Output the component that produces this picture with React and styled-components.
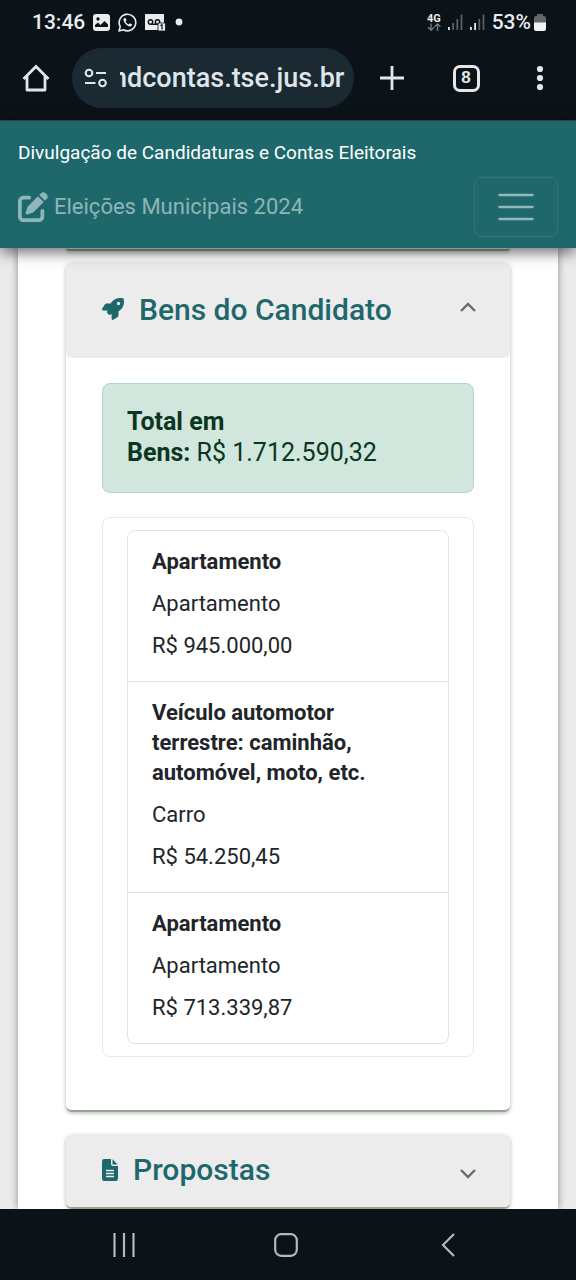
import { useState } from 'react';
import styled, { createGlobalStyle } from 'styled-components';
import { FaPenToSquare, FaRocket } from 'react-icons/fa6';

const GlobalStyle = createGlobalStyle`
  * {
    box-sizing: border-box;
  }

  body {
    margin: 0;
    background: #ebebeb;
    color: #212529;
    font-family: Roboto, "Noto Sans", sans-serif;
    font-size: 22px;
    line-height: 30px;
  }
`;

const Screen = styled.div`
  display: flex;
  flex-direction: column;
  min-height: 100vh;
`;

/* Barra de status do telefone */
const StatusBar = styled.div`
  display: flex;
  align-items: center;
  justify-content: space-between;
  height: 44px;
  padding: 0 30px 0 32px;
  background: #0b1218;
  color: #e8ecef;
  font-size: 21px;
  font-weight: 500;
`;

const StatusGroup = styled.div`
  display: flex;
  align-items: center;
  gap: ${props => props.$gap}px;
`;

/* Barra do navegador */
const BrowserBar = styled.div`
  display: flex;
  align-items: center;
  padding: 4px 16px 12px;
  background: #0b1218;
  border-bottom: 1px solid #3b4950;
`;

const IconButton = styled.button`
  display: flex;
  align-items: center;
  justify-content: center;
  flex: none;
  width: 40px;
  height: 40px;
  padding: 0;
  border: 0;
  background: none;
  color: #e3e7ea;
`;

const AddressPill = styled.label`
  display: flex;
  align-items: center;
  gap: 12px;
  flex: 1;
  min-width: 0;
  height: 60px;
  margin-left: 16px;
  padding: 0 8px 0 12px;
  border-radius: 30px;
  background: #1b2932;
  color: #dfe5ea;
`;

const AddressInput = styled.input`
  flex: 1;
  min-width: 0;
  padding: 0;
  border: 0;
  outline: 0;
  background: none;
  color: #dfe5ea;
  font: 500 27px Roboto, sans-serif;
  text-indent: -8px;
`;

const BrowserActions = styled.div`
  display: flex;
  justify-content: space-between;
  width: 188px;
  margin-left: 18px;
`;

const TabCount = styled.span`
  display: flex;
  align-items: center;
  justify-content: center;
  width: 27px;
  height: 27px;
  border: 3px solid #e3e7ea;
  border-radius: 7px;
  font-size: 17px;
  font-weight: 700;
  line-height: 20px;
`;

/* Cabeçalho do site */
const SiteHeader = styled.header`
  position: relative;
  z-index: 1;
  display: flex;
  flex-direction: column;
  gap: 9px;
  padding: 17px 18px 11px;
  background: #1e686c;
  box-shadow: 0 4px 14px rgba(0, 0, 0, 0.6);
  color: #fff;
`;

const SiteTitle = styled.div`
  font-size: 19px;
`;

const HeaderRow = styled.div`
  display: flex;
  align-items: center;
  justify-content: space-between;
`;

const Brand = styled.a`
  display: flex;
  align-items: center;
  gap: 6px;
  color: #8eb5b7;
  font-size: 22px;
  text-decoration: none;
`;

const MenuButton = styled.button`
  display: flex;
  align-items: center;
  justify-content: center;
  width: 84px;
  height: 60px;
  padding: 0;
  border: 1px solid #30767a;
  border-radius: 8px;
  background: none;
  color: #8eb8ba;
`;

const Content = styled.main`
  flex: 1;
  display: flex;
  flex-direction: column;
  gap: 23px;
  margin: 0 18px;
  padding: 0 48px;
  background: #fff;
  box-shadow: 0 0 8px rgba(0, 0, 0, 0.4);
`;

const Card = styled.section`
  border-bottom: 2px solid #93a791;
  border-radius: 6px;
  background: #fff;
  box-shadow: 0 1px 4px rgba(0, 0, 0, 0.3);
`;

/* Fim do painel anterior, logo abaixo do cabeçalho */
const CardEnd = styled.div`
  height: 3px;
  margin-bottom: -11px;
  border-bottom: 2px solid #93a791;
  border-radius: 0 0 6px 6px;
  box-shadow: 0 1px 4px rgba(0, 0, 0, 0.3);
`;

const CardHeader = styled.button`
  display: flex;
  align-items: center;
  width: 100%;
  height: ${props => (props.$open ? 95 : 72)}px;
  padding: 0 33px 3px 36px;
  border: 0;
  border-radius: 6px;
  background: #ececec;
  color: #1e686c;
  font: 500 30px Roboto, sans-serif;
  text-align: left;
`;

const CardTitle = styled.span`
  flex: 1;
  margin-left: 15px;
`;

const CardBody = styled.div`
  padding: 25px 36px 53px;
`;

const Total = styled.div`
  margin-bottom: 24px;
  padding: 22px 24px 24px;
  border: 1px solid #b4d6c5;
  border-radius: 8px;
  background: #d1e6dd;
  color: #0a3622;
  font-size: 25px;
  line-height: 31px;
`;

const ListFrame = styled.div`
  padding: 12px 24px;
  border: 1px solid #e8e8e8;
  border-radius: 8px;
`;

const AssetList = styled.ul`
  margin: 0;
  padding: 0;
  border: 1px solid #e2e2e2;
  border-radius: 8px;
  list-style: none;
`;

const Asset = styled.li`
  display: flex;
  flex-direction: column;
  gap: 12px;
  padding: 16px 24px 20px;

  & + & {
    border-top: 1px solid #e2e2e2;
  }
`;

/* Botões de navegação do sistema */
const SystemNav = styled.nav`
  position: relative;
  z-index: 1;
  display: flex;
  align-items: center;
  justify-content: space-around;
  height: 72px;
  padding: 0 47px 0 43px;
  background: #0b1218;
`;

const bens = [
  { id: 1, tipo: 'Apartamento', descricao: 'Apartamento', valor: 'R$ 945.000,00' },
  {
    id: 2,
    tipo: 'Veículo automotor terrestre: caminhão, automóvel, moto, etc.',
    descricao: 'Carro',
    valor: 'R$ 54.250,45',
  },
  { id: 3, tipo: 'Apartamento', descricao: 'Apartamento', valor: 'R$ 713.339,87' },
];

const PictureIcon = () => (
  <svg width="17" height="17" viewBox="0 0 17 17">
    <rect width="17" height="17" rx="3" fill="#e8ecef" />
    <circle cx="5" cy="5" r="1.7" fill="#0b1218" />
    <path d="M2 13 V11 L5 8.5 L7.5 11 L11.5 7 L15 10.5 V13 Z" fill="#0b1218" />
  </svg>
);

const WhatsappIcon = () => (
  <svg width="19" height="19" viewBox="0 0 19 19" fill="none">
    <path d="M1 18 L2.2 13.6 A8.3 8.3 0 1 1 5.4 16.8 Z" stroke="#e8ecef" strokeWidth="1.6" strokeLinejoin="round" />
    <path
      d="M6.8 5 C5.4 5.4 5 7.2 6.2 9 C7.6 11.5 9.6 13 11.6 13.4 C13.2 13.6 14.2 12.4 14 11.2 L11.8 10.2 L10.7 11.4 C9.3 10.8 8.2 9.7 7.6 8.4 L8.5 7.2 L7.7 5.1 Z"
      fill="#e8ecef"
    />
  </svg>
);

const VoicemailIcon = () => (
  <svg width="21" height="17" viewBox="0 0 21 17">
    <path d="M0 0 H19 V9 H14 V16 H0 Z" fill="#e8ecef" />
    <g fill="none" stroke="#0b1218" strokeWidth="1.4">
      <circle cx="5.5" cy="8" r="2.2" />
      <circle cx="12.5" cy="8" r="2.2" />
      <path d="M5.5 10.3 H12.5" />
    </g>
    <rect x="13" y="9" width="7.5" height="8" fill="#e8ecef" stroke="#0b1218" strokeWidth="0.8" />
    <path d="M15.3 11.5 L17 10.8 V15.5" fill="none" stroke="#0b1218" strokeWidth="1.2" />
  </svg>
);

const NetworkIcon = () => (
  <svg width="14" height="19" viewBox="0 0 14 19">
    <text x="0" y="9" fontSize="11" fontWeight="700" fill="#e8ecef">4G</text>
    <g fill="none" stroke="#737a80" strokeWidth="1.4">
      <path d="M4 10.5 V17 M1 14.3 L4 17.2 L7 14.3" />
      <path d="M10.5 18 V11 M7.6 13.8 L10.5 11 L13.4 13.8" />
    </g>
  </svg>
);

const SignalIcon = ({ level }) => (
  <svg width="15" height="16" viewBox="0 0 15 16">
    {[3, 7, 11, 15.5].map((h, i) => (
      <rect key={h} x={i * 4.2} y={16 - h} width="1.8" height={h} fill={i < level ? '#e8ecef' : '#596066'} />
    ))}
  </svg>
);

const BatteryIcon = () => (
  <svg width="12" height="17" viewBox="0 0 12 17">
    <path d="M3 0 H9 V2 H10 Q12 2 12 4 V9 H0 V4 Q0 2 2 2 H3 Z" fill="#62676b" />
    <path d="M0 8.5 H12 V15 Q12 17 10 17 H2 Q0 17 0 15 Z" fill="#f1f3f4" />
  </svg>
);

const HomeIcon = () => (
  <svg width="28" height="28" viewBox="0 0 28 28" fill="none" stroke="currentColor" strokeWidth="2.8">
    <path d="M1.5 15 L14 2.5 L26.5 15" />
    <path d="M5 12 V26 H23 V12" strokeLinejoin="round" />
  </svg>
);

const TuneIcon = () => (
  <svg width="24" height="20" viewBox="0 0 24 20" fill="none" stroke="currentColor" strokeWidth="2.1">
    <circle cx="5" cy="5" r="3.3" />
    <path d="M12 5 H22 M1 15 H11.5" />
    <circle cx="18.5" cy="15" r="3.3" />
  </svg>
);

const FileIcon = () => (
  <svg width="16" height="22" viewBox="0 0 16 22">
    <path d="M2.2 0 H9 V5 Q9 7 11 7 H16 V19.8 Q16 22 13.8 22 H2.2 Q0 22 0 19.8 V2.2 Q0 0 2.2 0 Z" fill="currentColor" />
    <path d="M10.5 0.3 L15.7 5.6 H10.5 Z" fill="currentColor" />
    <path d="M4 11.5 H12 M4 14.5 H12 M4 17.5 H12" stroke="#ececec" strokeWidth="1.3" />
  </svg>
);

const Chevron = ({ open }) => (
  <svg width="18" height="20" viewBox="0 0 18 20" fill="none" stroke="#6b6b6b" strokeWidth="2.4">
    <path d={open ? 'M2 12 L9 5 L16 12' : 'M2 10 L9 17 L16 10'} />
  </svg>
);

const Panel = ({ icon, title, defaultOpen = false, children }) => {
  const [open, setOpen] = useState(defaultOpen);

  return (
    <Card>
      <CardHeader type="button" $open={open} aria-expanded={open} onClick={() => setOpen(!open)}>
        {icon}
        <CardTitle>{title}</CardTitle>
        <Chevron open={open} />
      </CardHeader>
      {open && <CardBody>{children}</CardBody>}
    </Card>
  );
};

export default function App() {
  const [url, setUrl] = useState('ndcontas.tse.jus.br');

  return (
    <Screen>
      <GlobalStyle />
      <StatusBar>
        <StatusGroup $gap={8}>
          <span>13:46</span>
          <PictureIcon />
          <WhatsappIcon />
          <VoicemailIcon />
          <svg width="14" height="8" viewBox="0 0 14 8">
            <circle cx="5" cy="4" r="3.4" fill="#e8ecef" />
          </svg>
        </StatusGroup>
        <StatusGroup $gap={7}>
          <NetworkIcon />
          <SignalIcon level={1} />
          <SignalIcon level={2} />
          <StatusGroup $gap={3}>
            <span>53%</span>
            <BatteryIcon />
          </StatusGroup>
        </StatusGroup>
      </StatusBar>

      <BrowserBar>
        <IconButton type="button" aria-label="Página inicial">
          <HomeIcon />
        </IconButton>
        <AddressPill>
          <TuneIcon />
          <AddressInput aria-label="Endereço" value={url} onChange={e => setUrl(e.target.value)} />
        </AddressPill>
        <BrowserActions>
          <IconButton type="button" aria-label="Nova guia">
            <svg width="24" height="24" viewBox="0 0 24 24" stroke="currentColor" strokeWidth="2.8">
              <path d="M12 0 V24 M0 12 H24" />
            </svg>
          </IconButton>
          <IconButton type="button" aria-label="Guias abertas">
            <TabCount>8</TabCount>
          </IconButton>
          <IconButton type="button" aria-label="Mais opções">
            <svg width="8" height="26" viewBox="0 0 8 26" fill="currentColor">
              <circle cx="4" cy="4" r="3.1" />
              <circle cx="4" cy="13" r="3.1" />
              <circle cx="4" cy="22" r="3.1" />
            </svg>
          </IconButton>
        </BrowserActions>
      </BrowserBar>

      <SiteHeader>
        <SiteTitle>Divulgação de Candidaturas e Contas Eleitorais</SiteTitle>
        <HeaderRow>
          <Brand href="#">
            <FaPenToSquare size={30} />
            Eleições Municipais 2024
          </Brand>
          <MenuButton type="button" aria-label="Menu">
            <svg width="36" height="28" viewBox="0 0 36 28" stroke="currentColor" strokeWidth="2.6" strokeLinecap="round">
              <path d="M1.5 2 H34.5 M1.5 14 H34.5 M1.5 26 H34.5" />
            </svg>
          </MenuButton>
        </HeaderRow>
      </SiteHeader>

      <Content>
        <CardEnd />
        <Panel icon={<FaRocket size={22} />} title="Bens do Candidato" defaultOpen>
          <Total>
            <strong>
              Total em
              <br />
              Bens:
            </strong>{' '}
            R$ 1.712.590,32
          </Total>
          <ListFrame>
            <AssetList>
              {bens.map(bem => (
                <Asset key={bem.id}>
                  <strong>{bem.tipo}</strong>
                  <span>{bem.descricao}</span>
                  <span>{bem.valor}</span>
                </Asset>
              ))}
            </AssetList>
          </ListFrame>
        </Panel>
        <Panel icon={<FileIcon />} title="Propostas" />
      </Content>

      <SystemNav>
        <IconButton type="button" aria-label="Recentes">
          <svg width="24" height="24" viewBox="0 0 24 24" stroke="#b4b9bd" strokeWidth="2.2">
            <path d="M2.5 0 V24 M12 0 V24 M21.5 0 V24" />
          </svg>
        </IconButton>
        <IconButton type="button" aria-label="Início">
          <svg width="24" height="24" viewBox="0 0 24 24" fill="none" stroke="#b4b9bd" strokeWidth="2.2">
            <rect x="1.2" y="1.2" width="21.6" height="21.6" rx="6" />
          </svg>
        </IconButton>
        <IconButton type="button" aria-label="Voltar">
          <svg width="14" height="24" viewBox="0 0 14 24" fill="none" stroke="#b4b9bd" strokeWidth="2.2">
            <path d="M13 1 L2 12 L13 23" />
          </svg>
        </IconButton>
      </SystemNav>
    </Screen>
  );
}
